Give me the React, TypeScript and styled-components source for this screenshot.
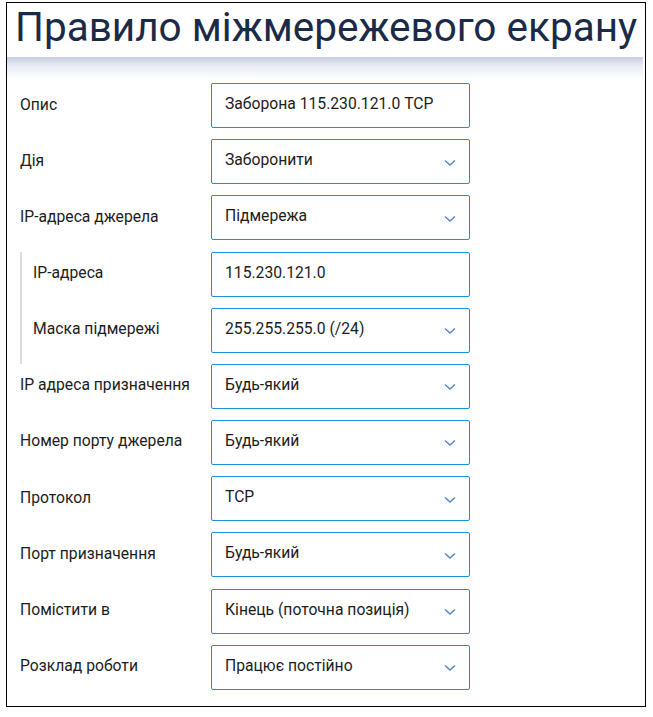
import React from "react";
import styled, { createGlobalStyle } from "styled-components";

const Global = createGlobalStyle`
  html, body { margin: 0; padding: 0; background: #fff; }
  body { font-family: Roboto, "Noto Sans", sans-serif; }
  * { box-sizing: border-box; }
`;

const Frame = styled.div`
  margin: 2px 0 0 6px;
  width: 640px;
  height: 705px;
  border: 1px solid #000;
  display: flex;
  flex-direction: column;
`;

const Header = styled.div`
  height: 54px;
  padding-left: 8px;
  display: flex;
  align-items: flex-start;
`;

const Title = styled.h1`
  margin: 0;
  font-family: Roboto, sans-serif;
  font-weight: 400;
  font-size: 40.5px;
  line-height: 48px;
  color: #1b2a47;
  white-space: nowrap;
`;

const Shade = styled.div`
  height: 22px;
  margin-right: 2px;
  background: linear-gradient(to bottom, #c6cce1 0%, #e9ebf4 40%, #ffffff 100%);
`;

const Form = styled.div`
  padding: 4px 0 0 13px;
  display: flex;
  flex-direction: column;
  gap: 11.2px;
`;

const Group = styled.div`
  border-left: 2px solid #d9dce5;
  padding: 0 0 11px 11px;
  margin-bottom: -11.2px;
  display: flex;
  flex-direction: column;
  gap: 11.2px;
`;

const Row = styled.div<{ $nested?: boolean }>`
  display: grid;
  grid-template-columns: ${(p) => (p.$nested ? "178px" : "191px")} 259px;
  align-items: center;
`;

const Label = styled.div`
  font-size: 15.7px;
  color: #1c1c1c;
  line-height: 20px;
  margin-top: -2px;
  white-space: nowrap;
`;

const Field = styled.div`
  height: 45px;
  border: 1px solid #1e8fd2;
  border-radius: 2px;
  display: flex;
  align-items: center;
  justify-content: space-between;
  padding: 0 12px 0 13px;
  font-size: 15.7px;
  color: #1c1c1c;
`;

const Value = styled.span`
  margin-top: -4px;
  white-space: nowrap;
`;

const Chevron = () => (
  <svg width="14" height="8" viewBox="0 0 14 8" style={{ marginTop: 2 }}>
    <polyline points="2,1.5 7,6 12,1.5" fill="none" stroke="#5d88c6" strokeWidth="1.6" />
  </svg>
);

type Item = { label: string; value: string; select?: boolean };

const Input = ({ label, value, select, nested }: Item & { nested?: boolean }) => (
  <Row $nested={nested}>
    <Label>{label}</Label>
    <Field>
      <Value>{value}</Value>
      {select && <Chevron />}
    </Field>
  </Row>
);

const top: Item[] = [
  { label: "Опис", value: "Заборона 115.230.121.0 TCP" },
  { label: "Дія", value: "Заборонити", select: true },
  { label: "IP-адреса джерела", value: "Підмережа", select: true },
];

const nested: Item[] = [
  { label: "IP-адреса", value: "115.230.121.0" },
  { label: "Маска підмережі", value: "255.255.255.0 (/24)", select: true },
];

const rest: Item[] = [
  { label: "IP адреса призначення", value: "Будь-який", select: true },
  { label: "Номер порту джерела", value: "Будь-який", select: true },
  { label: "Протокол", value: "TCP", select: true },
  { label: "Порт призначення", value: "Будь-який", select: true },
  { label: "Помістити в", value: "Кінець (поточна позиція)", select: true },
  { label: "Розклад роботи", value: "Працює постійно", select: true },
];

export default function App() {
  return (
    <>
      <Global />
      <Frame>
        <Header>
          <Title>Правило міжмережевого екрану</Title>
        </Header>
        <Shade />
        <Form>
          {top.map((i) => (
            <Input key={i.label} {...i} />
          ))}
          <Group>
            {nested.map((i) => (
              <Input key={i.label} {...i} nested />
            ))}
          </Group>
          {rest.map((i) => (
            <Input key={i.label} {...i} />
          ))}
        </Form>
      </Frame>
    </>
  );
}
